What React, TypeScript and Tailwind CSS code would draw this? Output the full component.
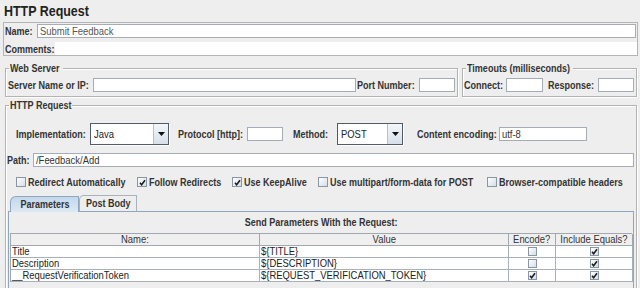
import React from "react";

// the narrow UI font of the original isn't installed, so text is squeezed horizontally
const T = ({ children, center }: { children: React.ReactNode; center?: boolean }) => (
  <span className={`inline-block whitespace-nowrap scale-x-[0.82] ${center ? "origin-center" : "origin-left"}`}>
    {children}
  </span>
);

const label = "shrink-0 whitespace-nowrap text-[11px] font-bold leading-[14px] text-[#333]";
const legend = "-mt-[8px] ml-[3px] h-[14px] overflow-visible bg-[#eeeeee] pl-[1px] text-[11px] font-bold leading-[14px] text-[#333]";
const etched = "border border-[#b3b3b3] shadow-[inset_1px_1px_0_#fff,1px_1px_0_#fff]";

const Field = ({ className = "", value = "" }: { className?: string; value?: string }) => (
  <div
    className={`h-[14px] shrink-0 overflow-hidden whitespace-nowrap border border-[#a4adb7] bg-white pl-[2px] text-[11.5px] leading-[12px] ${className}`}
  >
    {value && <T>{value}</T>}
  </div>
);

const Box = ({ on, small }: { on?: boolean; small?: boolean }) => (
  <span
    className={`inline-flex shrink-0 items-center justify-center border border-[#8a96a3] bg-linear-to-br from-white to-[#d3dde8] ${
      small ? "h-[9px] w-[9px]" : "h-[10px] w-[10px]"
    }`}
  >
    {on && (
      <svg width="7" height="7" viewBox="0 0 7 7">
        <path d="M1 3.8 L2.6 5.8 L6 1.2" fill="none" stroke="#1a1a1a" strokeWidth="1.5" />
      </svg>
    )}
  </span>
);

const Combo = ({ value, className }: { value: string; className: string }) => (
  <div className={`flex h-[22px] shrink-0 border border-[#525c68] bg-white shadow-[1px_1px_0_#fff] ${className}`}>
    <span className="flex-1 overflow-hidden pl-[3px] text-[11.5px] leading-[20px] text-[#222]">
      <T>{value}</T>
    </span>
    <span className="flex w-[15px] items-center justify-center border-l border-[#b4c0cc] bg-linear-to-b from-[#f4f7fa] to-[#d6e0ea]">
      <svg width="7" height="4" viewBox="0 0 7 4">
        <path d="M0 0 H7 L3.5 4 Z" fill="#111" />
      </svg>
    </span>
  </div>
);

const Check = ({ on, text, className }: { on?: boolean; text: string; className: string }) => (
  <div className={`flex shrink-0 items-center ${className}`}>
    <Box on={on} />
    <span className={`${label} ml-[2px]`}>
      <T>{text}</T>
    </span>
  </div>
);

const rows = [
  { name: "Title", value: "${TITLE}", encode: false },
  { name: "Description", value: "${DESCRIPTION}", encode: false },
  { name: "__RequestVerificationToken", value: "${REQUEST_VERIFICATION_TOKEN}", encode: true },
];

const cell = "h-[12px] overflow-hidden whitespace-nowrap border-r border-b border-[#a7b1bc] bg-white text-[11.5px] leading-[11px] text-[#222]";
const head = "flex h-[12px] items-center justify-center overflow-hidden whitespace-nowrap border-r border-b border-[#a0a8b0] bg-[#efefef] text-[11.5px] leading-[11px] text-[#333]";

export default function App() {
  return (
    <div className="h-[288px] w-[640px] overflow-hidden bg-[#eeeeee] font-['Liberation_Sans',Arial,sans-serif] text-[#333]">
      <div className="h-[22px] pl-[4px] pt-[2px] text-[15px] font-bold leading-[18px] text-[#222]">
        <span className="inline-block origin-left scale-x-[0.83]">HTTP Request</span>
      </div>

      <div className="ml-[3px] mr-[2px] h-[34px] border border-[#b5b5b5]">
        <div className="flex h-[16px] items-center pl-[1px]">
          <span className={`${label} w-[32px]`}>
            <T>Name:</T>
          </span>
          <Field className="mr-[1px] flex-1 shrink text-[#555]" value="Submit Feedback" />
        </div>
        <div className="mt-[3px] flex h-[13px] items-center pl-[1px]">
          <span className={`${label} w-[50px]`}>
            <T>Comments:</T>
          </span>
          <div className="h-full flex-1 bg-white" />
        </div>
      </div>

      <div className="mt-[12px] flex pl-[5px]">
        <div className={`h-[29px] w-[453px] ${etched}`}>
          <div className={`${legend} w-[54px]`}>
            <T>Web Server</T>
          </div>
          <div className="mt-[3px] flex items-center pl-[2px]">
            <span className={`${label} w-[85px]`}>
              <T>Server Name or IP:</T>
            </span>
            <Field className="w-[263px]" />
            <span className={`${label} ml-[1px] w-[62px]`}>
              <T>Port Number:</T>
            </span>
            <Field className="w-[36px]" />
          </div>
        </div>
        <div className={`ml-[4px] h-[29px] w-[175px] ${etched}`}>
          <div className={`${legend} w-[107px]`}>
            <T>Timeouts (milliseconds)</T>
          </div>
          <div className="mt-[3px] flex items-center pl-[1px]">
            <span className={`${label} w-[42px]`}>
              <T>Connect:</T>
            </span>
            <Field className="w-[37px]" />
            <span className={`${label} ml-[5px] w-[50px]`}>
              <T>Response:</T>
            </span>
            <Field className="w-[36px]" />
          </div>
        </div>
      </div>

      <div className={`ml-[5px] mt-[8px] h-[200px] w-[632px] ${etched}`}>
        <div className={`${legend} w-[63px]`}>
          <T>HTTP Request</T>
        </div>

        <div className="mt-[11px] flex h-[22px] items-center pl-[10px]">
          <span className={`${label} w-[74px]`}>
            <T>Implementation:</T>
          </span>
          <Combo value="Java" className="w-[79px]" />
          <span className={`${label} ml-[9px] w-[69px]`}>
            <T>Protocol [http]:</T>
          </span>
          <Field className="w-[36px]" />
          <span className={`${label} ml-[10px] w-[44px]`}>
            <T>Method:</T>
          </span>
          <Combo value="POST" className="w-[66px]" />
          <span className={`${label} ml-[14px] w-[82px]`}>
            <T>Content encoding:</T>
          </span>
          <Field className="w-[88px]" value="utf-8" />
        </div>

        <div className="mt-[8px] flex items-center pl-[1px]">
          <span className={`${label} w-[26px]`}>
            <T>Path:</T>
          </span>
          <Field className="mr-[2px] flex-1 shrink" value="/Feedback/Add" />
        </div>

        <div className="mt-[10px] flex h-[10px] items-center pl-[10px]">
          <Check text="Redirect Automatically" className="w-[121px]" />
          <Check on text="Follow Redirects" className="w-[95px]" />
          <Check on text="Use KeepAlive" className="w-[86px]" />
          <Check text="Use multipart/form-data for POST" className="w-[169px]" />
          <Check text="Browser-compatible headers" className="w-[140px]" />
        </div>

        <div className="relative z-10 -mb-[1px] mt-[8px] flex h-[17px] items-start pl-[4px]">
          <div className="mt-[1px] flex h-[16px] w-[69px] items-center justify-center overflow-hidden rounded-tl-[6px] border border-b-0 border-[#8fa6be] bg-linear-to-b from-[#c3d8ee] to-[#dce8f4] text-[11px] font-bold text-[#333]">
            <T center>Parameters</T>
          </div>
          <div className="flex h-[16px] w-[58px] items-center justify-center overflow-hidden rounded-tl-[5px] border border-b-0 border-[#a9b2bb] bg-[#eeeeee] text-[11px] font-bold text-[#333]">
            <T center>Post Body</T>
          </div>
        </div>

        <div className="ml-[2px] h-[100px] w-[626px] border border-[#8fa6be] bg-[#eeeeee]">
          <div className="flex h-[21px] items-center justify-center text-[11px] font-bold text-[#333]">
            <T center>Send Parameters With the Request:</T>
          </div>
          <div className="ml-[1px] grid w-[622px] grid-cols-[249px_249px_47px_77px] border-t border-l border-[#a0a8b0]">
            <div className={head}>
              <T center>Name:</T>
            </div>
            <div className={head}>
              <T center>Value</T>
            </div>
            <div className={head}>
              <T center>Encode?</T>
            </div>
            <div className={head}>
              <T center>Include Equals?</T>
            </div>
            {rows.map((r) => (
              <React.Fragment key={r.name}>
                <div className={`${cell} pl-[1px]`}>
                  <T>{r.name}</T>
                </div>
                <div className={`${cell} pl-[1px]`}>
                  <T>{r.value}</T>
                </div>
                <div className={`${cell} flex items-center justify-center`}>
                  <Box small on={r.encode} />
                </div>
                <div className={`${cell} flex items-center justify-center`}>
                  <Box small on />
                </div>
              </React.Fragment>
            ))}
          </div>
        </div>
      </div>
    </div>
  );
}
